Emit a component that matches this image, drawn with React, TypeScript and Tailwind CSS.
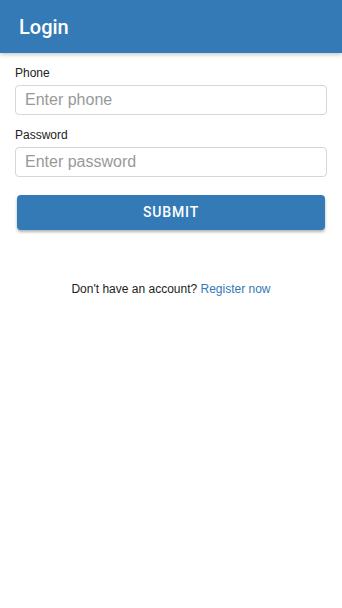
export default function App() {
  return (
    <div className="min-h-[608px] bg-white font-['Liberation_Sans',Arial,sans-serif]">
      {/* Header */}
      <header className="flex h-[53px] items-center bg-[#337ab7] px-[19px] shadow-[0_2px_4px_rgba(0,0,0,0.2)]">
        <h1 className="font-['Roboto',sans-serif] text-[20px] font-medium text-white">Login</h1>
      </header>

      {/* Form */}
      <form className="px-[15px] pt-[12px]" onSubmit={(e) => e.preventDefault()}>
        <label className="block text-[12px] leading-[16px] text-[#222]">Phone</label>
        <input
          type="tel"
          placeholder="Enter phone"
          className="mt-[4px] block h-[30px] w-full rounded-[4px] border border-[#d6d6d6] px-[9px] text-[16px] text-[#333] placeholder:text-[#999] outline-none"
        />

        <label className="mt-[12px] block text-[12px] leading-[16px] text-[#222]">Password</label>
        <input
          type="password"
          placeholder="Enter password"
          className="mt-[4px] block h-[30px] w-full rounded-[4px] border border-[#d6d6d6] px-[9px] text-[16px] text-[#333] placeholder:text-[#999] outline-none"
        />

        <div className="px-[2px] pt-[18px]">
          <button
            type="submit"
            className="h-[35px] w-full rounded-[4px] bg-[#337ab7] font-['Roboto',sans-serif] text-[14px] font-medium tracking-[0.06em] text-white shadow-[0_2px_3px_rgba(0,0,0,0.3)]"
          >
            SUBMIT
          </button>
        </div>
      </form>

      {/* Footer link */}
      <p className="mt-[51px] text-center text-[12px] leading-[16px] text-[#222]">
        Don't have an account? <a href="#" className="text-[#337ab7]">Register now</a>
      </p>
    </div>
  );
}
